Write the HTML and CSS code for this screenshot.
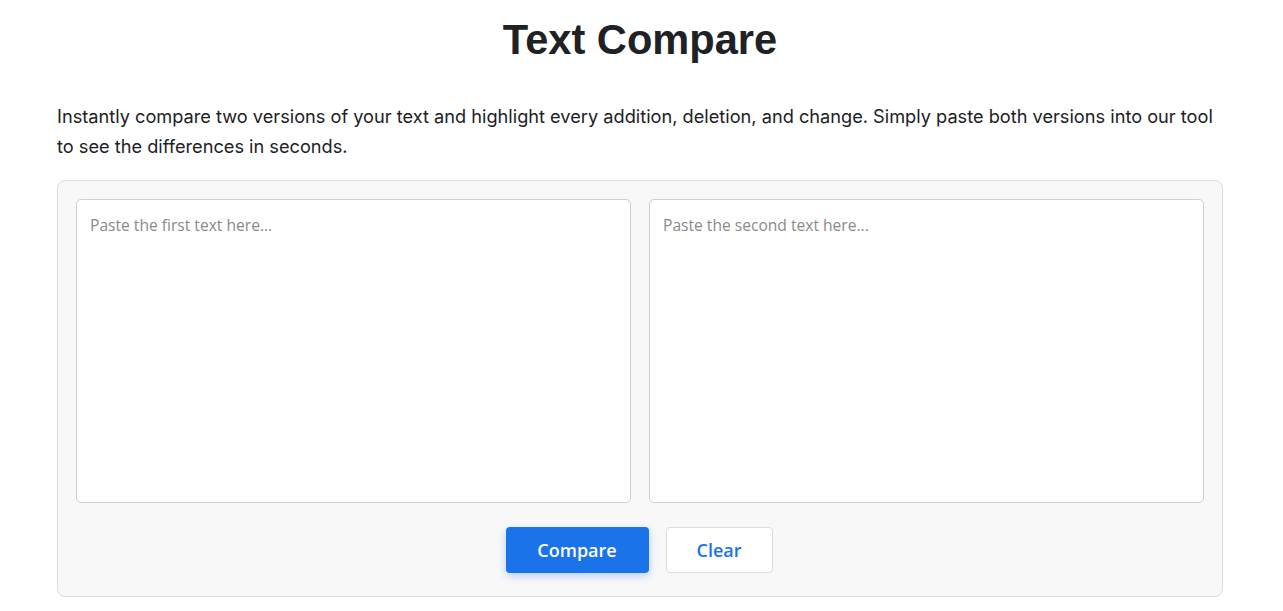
FILE: index.html
```html
<!DOCTYPE html>
<html>
<head>
  <meta charset="UTF-8">
  <link rel="stylesheet" href="styles.css">
</head>
<body>
  <div class="tc-page">
    <h1 class="tc-title">Text Compare</h1>
    <p class="tc-intro">Instantly compare two versions of your text and highlight every addition, deletion, and change. Simply paste both versions into our tool to see the differences in seconds.</p>

    <!-- Панель сравнения -->
    <div class="tc-panel">
      <div class="tc-inputs">
        <textarea id="textLeft" placeholder="Paste the first text here..."></textarea>
        <textarea id="textRight" placeholder="Paste the second text here..."></textarea>
      </div>
      <div class="tc-actions">
        <button id="compareButton" class="tc-btn tc-btn-primary">Compare</button>
        <button id="clearButton" class="tc-btn tc-btn-secondary">Clear</button>
      </div>
    </div>
  </div>
</body>
</html>
```

FILE: styles.css
```css
body {
  margin: 0;
  background-color: #fff;
  color: #1f2328;
  font-family: Inter, "Noto Sans", sans-serif;
}
.tc-page {
  margin: 0 60px 0 57px;
}
.tc-title {
  margin: 16px 0 0;
  text-align: center;
  font-family: "Liberation Sans", Arial, sans-serif;
  font-size: 41.6px;
  font-weight: bold;
  line-height: 48px;
  color: #202124;
}
.tc-intro {
  margin: 37px 0 19px;
  font-size: 18.2px;
  line-height: 30px;
  color: #202124;
}
.tc-panel {
  padding: 18px 18px 23px;
  background-color: #f8f8f8;
  border: 1px solid #dcdcdc;
  border-radius: 8px;
}
.tc-inputs {
  display: flex;
  gap: 18px;
}
.tc-inputs textarea {
  flex: 1;
  height: 304px;
  box-sizing: border-box;
  padding: 14px 13px;
  border: 1px solid #cfcfcf;
  border-radius: 5px;
  background-color: #fff;
  font-family: "Open Sans", "Noto Sans", sans-serif;
  font-size: 15.6px;
  resize: none;
}
.tc-inputs textarea::placeholder {
  color: #8a8a8a;
}
.tc-actions {
  display: flex;
  justify-content: center;
  gap: 17px;
  margin-top: 24px;
  padding-right: 2px;
}
.tc-btn {
  height: 46px;
  border-radius: 4px;
  font-family: "Open Sans", "Noto Sans", sans-serif;
  font-size: 18px;
  font-weight: 600;
  cursor: pointer;
}
.tc-btn-primary {
  width: 143px;
  border: none;
  background-color: #1a73e8;
  color: #fff;
  box-shadow: 0 3px 8px rgba(26, 115, 232, 0.3);
}
.tc-btn-secondary {
  width: 107px;
  border: 1px solid #dadce0;
  background-color: #fff;
  color: #1a73e8;
}
```
